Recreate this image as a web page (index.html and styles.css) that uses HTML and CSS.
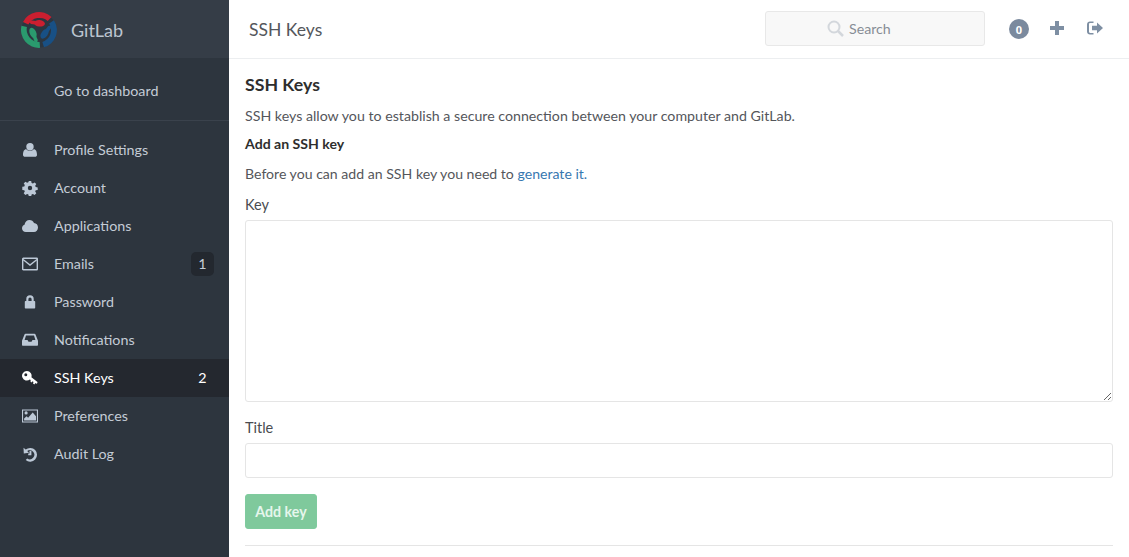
FILE: index.html
```html
<!DOCTYPE html>
<html lang="en">
<head>
<meta charset="utf-8">
<title>SSH Keys</title>
<link rel="stylesheet" href="styles.css">
</head>
<body>
<div class="app">
  <aside class="sidebar">
    <div class="brand">
      <svg class="logo" width="36" height="36" viewBox="0 0 36 36">
        <defs>
          <g id="arm">
            <path d="M2 10A18 18 0 0 1 30.500 5L26.700 9.100A12.500 12.500 0 0 0 7.300 12.500z"/>
            <path d="M7.500 9.500 11 8.500 15 9 14 12.500 10 12z"/>
            <ellipse cx="18.500" cy="11.300" rx="5.500" ry="3.200" transform="rotate(6 18.500 11.300)"/>
          </g>
        </defs>
        <circle cx="18" cy="18" r="17.500" fill="#2c3640"/>
        <use href="#arm" fill="#cb1f30"/>
        <use href="#arm" fill="#2a9a6e" transform="rotate(-120 18 18)"/>
        <use href="#arm" fill="#185085" transform="rotate(120 18 18)"/>
      </svg>
      <span class="brand-name">GitLab</span>
    </div>
    <nav class="nav">
      <a class="dash-link">Go to dashboard</a>
      <ul class="menu">
        <li class="item"><svg class="ico" viewBox="0 0 16 16"><circle cx="8" cy="4.700" r="3.700"/><path d="M3 14.800c-1 0-2-.7-2-1.800 0-3.500 1-5.800 3.300-5.800C5.300 8.200 6.500 8.800 8 8.800s2.700-.6 3.700-1.600C14 7.200 15 9.500 15 13c0 1.100-1 1.800-2 1.800z"/></svg><span>Profile Settings</span></li>
        <li class="item"><svg class="ico" viewBox="0 0 16 16"><path fill-rule="evenodd" d="M6.800 1h2.400l.4 2 1.300.5 1.700-1.100 1.700 1.700-1.100 1.700.5 1.300 2 .4v2.400l-2 .4-.5 1.300 1.100 1.700-1.700 1.700-1.700-1.100-1.300.5-.4 2H6.800l-.4-2-1.300-.5-1.700 1.100-1.700-1.700 1.100-1.700-.5-1.300-2-.4V6.800l2-.4.500-1.300-1.100-1.700 1.700-1.700 1.700 1.100 1.300-.5zM8 5.800a2.200 2.200 0 1 0 0 4.400 2.200 2.200 0 0 0 0-4.400z"/></svg><span>Account</span></li>
        <li class="item"><svg class="ico" viewBox="0 0 16 16"><path d="M3.800 14C1.700 14 0 12.400 0 10.300c0-1.700 1-3.100 2.500-3.600C3 3.800 5 2 7.500 2c2 0 3.800 1.200 4.500 3.100 2.300.1 4 1.900 4 4.400 0 2.500-1.800 4.500-4 4.500z"/></svg><span>Applications</span></li>
        <li class="item"><svg class="ico ico-line" viewBox="0 0 16 16"><rect x=".7" y="2.200" width="14.600" height="11.600" rx=".6"/><path d="M1 3.500 8 9l7-5.500"/></svg><span>Emails</span><b class="count count-box">1</b></li>
        <li class="item"><svg class="ico" viewBox="0 0 16 16"><path fill-rule="evenodd" d="M4.300 7V5a3.700 3.700 0 0 1 7.400 0v2h.5c.6 0 1 .4 1 1v5.500c0 .6-.4 1-1 1H3.800c-.6 0-1-.4-1-1V8c0-.6.400-1 1-1zm2.100 0h3.200V5a1.600 1.600 0 0 0-3.200 0z"/></svg><span>Password</span></li>
        <li class="item"><svg class="ico" viewBox="0 0 16 16"><path fill-rule="evenodd" d="M3.500 1.800h9c.5 0 .8.300 1 .7L15.700 8c.2.300.3.700.3 1v3.700c0 .6-.4 1-1 1H1c-.6 0-1-.4-1-1V9c0-.3.100-.7.300-1l2.200-5.500c.2-.4.500-.7 1-.7zm.5 1.800L2.600 8h2.900l1 1.800h3l1-1.800h2.900L12 3.600z"/></svg><span>Notifications</span></li>
        <li class="item active"><svg class="ico" viewBox="0 0 16 16"><path fill-rule="evenodd" d="M5 1a4.800 4.800 0 0 1 4.400 6.200l6.100 4.800-.3 1.300-1 .4-.9-.7-.9 1.500-1.400-1.100.5-1.400-1-.8-.8 1.200-1.300-1 .3-1.300-.8-.6A4.800 4.800 0 1 1 5 1zM3.800 3.200a1.500 1.500 0 1 0 0 3 1.500 1.500 0 0 0 0-3z"/></svg><span>SSH Keys</span><b class="count">2</b></li>
        <li class="item"><svg class="ico" viewBox="0 0 16 16"><path fill-rule="evenodd" d="M0 1.500h16v13H0zm1.100 1.100v10.800h13.800V2.600zm3 .7a1.600 1.600 0 1 1 0 3.200 1.600 1.600 0 0 1 0-3.200zM2.100 12.600v-2l2.500-2.300 1.500 1.400 4.600-5.200L14 8.300v4.300z"/></svg><span>Preferences</span></li>
        <li class="item"><svg class="ico" viewBox="0 0 16 16"><path d="M1.500 1.800 1.800 7.400 7 6.700 5.200 5A4.500 4.500 0 1 1 5.200 12.400l-1.500 1.700A6.900 6.900 0 1 0 3.700 3.500z"/><path d="M7.500 4.800h1.900v4.400H6.200V7.500h1.300z"/></svg><span>Audit Log</span></li>
      </ul>
    </nav>
  </aside>
  <div class="main">
    <header class="topbar">
      <h1 class="page-title">SSH Keys</h1>
      <div class="search">
        <svg class="search-ico" width="17" height="17" viewBox="0 0 17 17"><circle cx="7" cy="7" r="5.500" fill="none" stroke="#d3d7dc" stroke-width="2"/><path d="M11 11l5 5" stroke="#d3d7dc" stroke-width="2.500"/></svg>
        <span class="search-label">Search</span>
      </div>
      <span class="todo">0</span>
      <svg class="top-ico" width="16" height="16" viewBox="0 0 16 16"><path d="M6 1h4v5h5v4h-5v5H6v-5H1V6h5z" fill="#7e8fa3"/></svg>
      <svg class="top-ico top-ico-last" width="16" height="16" viewBox="0 0 16 16"><path fill="#7e8fa3" fill-rule="evenodd" d="M3 1.500h3.500v1.500H3.200C2.500 3 2 3.500 2 4.200v7.600c0 .7.500 1.200 1.200 1.200h3.300v1.500H3c-1.700 0-3-1.300-3-3V4.500c0-1.700 1.300-3 3-3zM10 2.500 16 8l-6 5.500V10.300H5V5.700h5z"/></svg>
    </header>
    <main class="content">
      <h3 class="heading">SSH Keys</h3>
      <p class="lead">SSH keys allow you to establish a secure connection between your computer and GitLab.</p>
      <h4 class="subheading">Add an SSH key</h4>
      <p class="hint">Before you can add an SSH key you need to <a class="link">generate it.</a></p>
      <form class="form">
        <label class="label" for="key">Key</label>
        <textarea class="field area" id="key"></textarea>
        <label class="label label-title" for="title">Title</label>
        <input class="field input" id="title" type="text">
        <button class="btn" type="button">Add key</button>
      </form>
      <hr class="rule">
    </main>
  </div>
</div>
</body>
</html>
```

FILE: styles.css
```css
* { box-sizing: border-box; }
html, body { margin: 0; height: 557px; overflow: hidden; background: #fff; }
body { font-family: "Lato", "Noto Sans", sans-serif; font-size: 14.2px; color: #54565b; }
h1, h3, h4, p, ul { margin: 0; padding: 0; }
.app { display: flex; height: 557px; }

.sidebar { width: 229px; flex: none; background: #2d353e; color: #c4ccd6; font-size: 14.3px; }
.brand { height: 58px; display: flex; align-items: center; padding-left: 21px; background: #353d47; }
.logo { flex: none; margin-top: 1px; }
.brand-name { margin-left: 14px; margin-top: 2px; font-size: 18px; color: #bcc5d0; }
.nav { display: block; }
.dash-link { display: flex; align-items: center; height: 63px; padding-left: 54px; padding-top: 2px; border-bottom: 1px solid #3a424c; margin-bottom: 10px; }
.menu { list-style: none; }
.item { display: flex; align-items: center; height: 38px; padding: 0 15px 0 22px; }
.item > span { padding-bottom: 2px; }
.ico { width: 16px; height: 16px; margin-right: 16px; flex: none; fill: #bcc8d6; }
.ico-line { fill: none; stroke: #bcc8d6; stroke-width: 1.4; }
.item.active { background: #24282f; color: #fff; }
.item.active .ico { fill: #fff; }
.count { margin-left: auto; width: 23px; height: 24px; padding-bottom: 2px; display: flex; align-items: center; justify-content: center; font-weight: 400; border-radius: 5px; }
.count-box { background: #23282f; }

.main { flex: 1; min-width: 0; }
.topbar { height: 59px; display: flex; align-items: center; padding: 0 26px 0 20px; border-bottom: 1px solid #eceef0; }
.page-title { flex: 1; font-size: 17.5px; font-weight: 400; color: #54565b; }
.search { width: 220px; height: 35px; margin-top: -1px; padding-left: 61px; display: flex; align-items: center; background: #f8f8f8; border: 1px solid #e8e8e8; border-radius: 3px; }
.search-ico { margin-right: 5px; }
.search-label { color: #878d95; }
.todo { width: 20px; height: 20px; margin-left: 24px; border-radius: 50%; background: #7b8a9e; color: #fff; font-family: "Noto Sans", sans-serif; font-size: 11px; font-weight: 700; display: flex; align-items: center; justify-content: center; }
.top-ico { margin-left: 20px; flex: none; margin-top: -2px; }
.top-ico-last { margin-left: 22px; }

.content { padding: 0 16px; }
.heading { font-size: 17.7px; font-weight: 700; color: #2e2e2e; line-height: 24px; margin-top: 14px; }
.lead { line-height: 20px; margin-top: 9px; }
.subheading { font-size: 14.1px; font-weight: 700; color: #2e2e2e; line-height: 20px; margin-top: 8px; }
.hint { font-size: 14.1px; line-height: 20px; margin-top: 10px; }
.link { color: #3777b0; }
.form { display: flex; flex-direction: column; align-items: flex-start; }
.label { font-size: 14.5px; color: #4a4c51; line-height: 20px; margin-top: 11px; margin-bottom: 5px; }
.label-title { margin-top: 16px; }
.field { display: block; width: 100%; border: 1px solid #e5e5e5; border-radius: 3px; background: #fff; outline: none; font: inherit; }
.area { height: 182px; resize: vertical; }
.input { height: 35px; }
.btn { width: 72px; height: 35px; margin-top: 16px; border: 1px solid #7fcb9e; border-radius: 3px; background: #7fc99c; color: #e6f6ec; font-family: "Lato", "Noto Sans", sans-serif; font-size: 14.2px; font-weight: 700; padding: 0; }
.rule { border: 0; border-top: 1px solid #e5e5e5; margin: 16px 0 0; }
```
